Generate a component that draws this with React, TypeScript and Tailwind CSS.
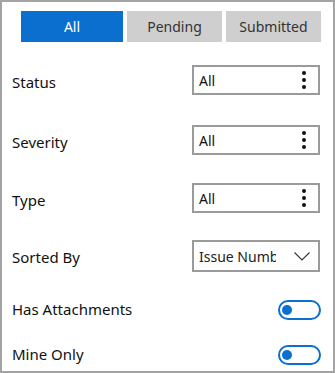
import { useState } from "react";

type Tab = "All" | "Pending" | "Submitted";

const Kebab = () => (
  <div className="flex flex-col items-center gap-[3px] mr-[12px]">
    <span className="w-[4px] h-[4px] rounded-full bg-[#111]" />
    <span className="w-[4px] h-[4px] rounded-full bg-[#111]" />
    <span className="w-[4px] h-[4px] rounded-full bg-[#111]" />
  </div>
);

const Chevron = () => (
  <svg width="16" height="9" viewBox="0 0 16 9" className="mr-[8px]">
    <path d="M0.5 0.5 L8 8 L15.5 0.5" fill="none" stroke="#333" strokeWidth="1.1" />
  </svg>
);

const PickBox = ({ value }: { value: string }) => (
  <div className="flex items-center justify-between w-[128px] h-[30px] border-2 border-[#9a9a9a] bg-white">
    <span className="pl-[5px] text-[14px] text-[#111]">{value}</span>
    <Kebab />
  </div>
);

const Toggle = ({ on, setOn }: { on: boolean; setOn: (v: boolean) => void }) => (
  <button
    onClick={() => setOn(!on)}
    className="flex items-center w-[43px] h-[20px] rounded-full border-2 border-[#0a6fcf] bg-white mr-[12px]"
  >
    <span className="w-[10px] h-[10px] rounded-full bg-[#0a6fcf] ml-[2px]" />
  </button>
);

export default function App() {
  const [tab, setTab] = useState<Tab>("All");
  const [attach, setAttach] = useState(false);
  const [mine, setMine] = useState(false);

  const tabs: { label: Tab; w: string }[] = [
    { label: "All", w: "w-[102px]" },
    { label: "Pending", w: "w-[95px]" },
    { label: "Submitted", w: "w-[95px]" },
  ];

  return (
    <div
      className="w-[335px] h-[373px] border-2 border-[#a3a3a3] bg-white text-[#111] overflow-hidden"
      style={{ fontFamily: '"Noto Sans", "Open Sans", sans-serif' }}
    >
      <div className="flex gap-[4px] pl-[19px] mt-[9px]">
        {tabs.map((t) => (
          <button
            key={t.label}
            onClick={() => setTab(t.label)}
            className={`${t.w} h-[31px] text-[14px] ${
              tab === t.label ? "bg-[#0a6fcf] text-white" : "bg-[#cfcfcf] text-[#333]"
            }`}
          >
            {t.label}
          </button>
        ))}
      </div>

      <div className="flex items-center justify-between pl-[10px] pr-[13px] mt-[23px] h-[30px]">
        <span className="text-[15px] pt-[5px]">Status</span>
        <PickBox value="All" />
      </div>

      <div className="flex items-center justify-between pl-[10px] pr-[13px] mt-[30px] h-[30px]">
        <span className="text-[15px] pt-[5px]">Severity</span>
        <PickBox value="All" />
      </div>

      <div className="flex items-center justify-between pl-[10px] pr-[13px] mt-[28px] h-[30px]">
        <span className="text-[15px] pt-[5px]">Type</span>
        <PickBox value="All" />
      </div>

      <div className="flex items-center justify-between pl-[10px] pr-[13px] mt-[27px] h-[32px]">
        <span className="text-[15px] pt-[2px]">Sorted By</span>
        <div className="flex items-center justify-between w-[128px] h-[32px] border-2 border-[#9a9a9a] bg-white">
          <span className="pl-[5px] w-[82px] overflow-hidden whitespace-nowrap text-[14px] text-[#222]">
            Issue Number
          </span>
          <Chevron />
        </div>
      </div>

      <div className="flex items-center justify-between pl-[10px] pr-[0px] mt-[28px] h-[20px]">
        <span className="text-[15px] -mt-[2px]">Has Attachments</span>
        <Toggle on={attach} setOn={setAttach} />
      </div>

      <div className="flex items-center justify-between pl-[10px] pr-[0px] mt-[25px] h-[20px]">
        <span className="text-[15px] -mt-[2px]">Mine Only</span>
        <Toggle on={mine} setOn={setMine} />
      </div>
    </div>
  );
}
